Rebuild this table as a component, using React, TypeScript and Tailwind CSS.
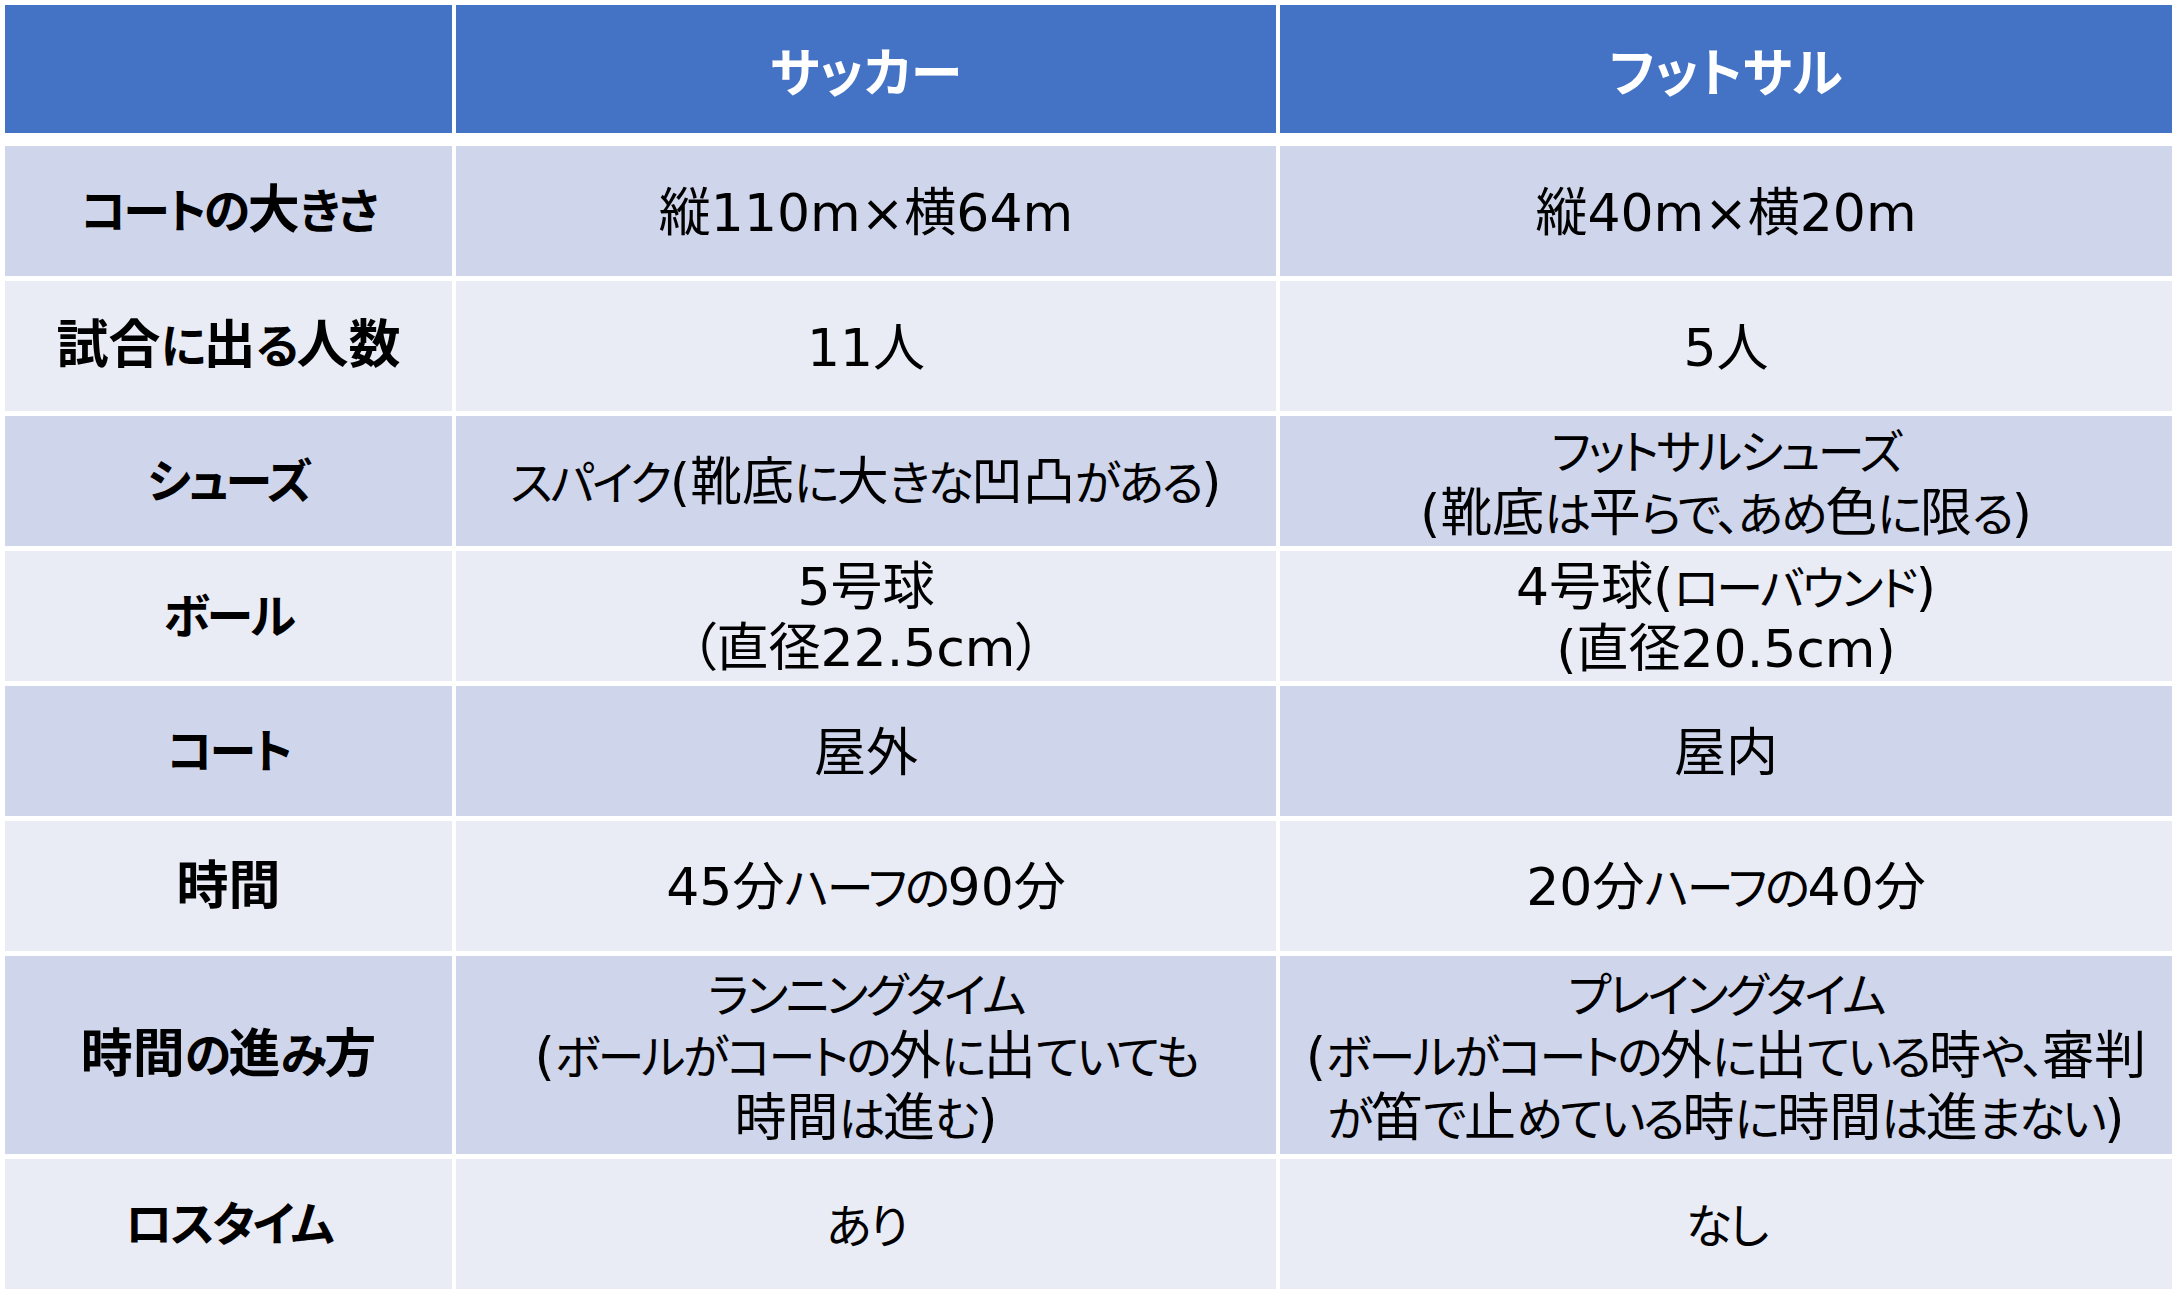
import React from 'react';

type Row = {
  label: string;
  soccer: string[];
  futsal: string[];
  tall?: boolean;
};

const ROWS: Row[] = [
  { label: 'コートの大きさ', soccer: ['縦110m×横64m'], futsal: ['縦40m×横20m'] },
  { label: '試合に出る人数', soccer: ['11人'], futsal: ['5人'] },
  {
    label: 'シューズ',
    soccer: ['スパイク(靴底に大きな凹凸がある)'],
    futsal: ['フットサルシューズ', '(靴底は平らで、あめ色に限る)'],
  },
  {
    label: 'ボール',
    soccer: ['5号球', '（直径22.5cm）'],
    futsal: ['4号球(ローバウンド)', '(直径20.5cm)'],
  },
  { label: 'コート', soccer: ['屋外'], futsal: ['屋内'] },
  { label: '時間', soccer: ['45分ハーフの90分'], futsal: ['20分ハーフの40分'] },
  {
    label: '時間の進み方',
    soccer: ['ランニングタイム', '(ボールがコートの外に出ていても', '時間は進む)'],
    futsal: [
      'プレイングタイム',
      '(ボールがコートの外に出ている時や、審判',
      'が笛で止めている時に時間は進まない)',
    ],
    tall: true,
  },
  { label: 'ロスタイム', soccer: ['あり'], futsal: ['なし'] },
];

// kana in the slide font are narrower than kanji, so set them a bit smaller and tighter
const KANA = /([\u3040-\u30ff\u3001\u3002]+)/;

function Line({ text, condense }: { text: string; condense: boolean }) {
  if (!condense) return <span>{text}</span>;
  return (
    <span>
      {text.split(KANA).map((part, i) =>
        KANA.test(part) ? (
          <span key={i} className="text-[47px] tracking-[-2.5px]">
            {part}
          </span>
        ) : (
          <React.Fragment key={i}>{part}</React.Fragment>
        )
      )}
    </span>
  );
}

function Cell({
  lines,
  bold,
  condense = true,
  className,
}: {
  lines: string[];
  bold?: boolean;
  condense?: boolean;
  className: string;
}) {
  return (
    <div
      className={
        'flex flex-col items-center justify-center overflow-visible text-center leading-[61px] whitespace-nowrap ' +
        (bold ? 'font-bold ' : '') +
        className
      }
    >
      {lines.map((l, i) => (
        <Line key={i} text={l} condense={condense} />
      ))}
    </div>
  );
}

export default function App(): React.ReactElement {
  return (
    <div className="min-h-screen bg-white pt-[5px] pl-[5px] font-['DejaVu_Sans','Noto_Sans_CJK_JP',sans-serif] text-[52px] text-black [font-feature-settings:'palt']">
      <div className="grid w-[2167px] grid-cols-[447px_820px_892px] gap-x-[4px] gap-y-[5px]">
        {/* Header */}
        <div className="h-[128px] bg-[#4472c4]" />
        <Cell
          lines={['サッカー']}
          bold
          condense={false}
          className="h-[128px] bg-[#4472c4] pt-[10px] text-white"
        />
        <Cell
          lines={['フットサル']}
          bold
          condense={false}
          className="h-[128px] bg-[#4472c4] pt-[10px] text-white"
        />
        <div className="col-span-3 h-[3px]" />

        {ROWS.map((row, i) => {
          const bg = i % 2 === 0 ? 'bg-[#cfd5ea]' : 'bg-[#e9ebf5]';
          const h = row.tall ? 'h-[198px]' : 'h-[130px]';
          return (
            <React.Fragment key={row.label}>
              <Cell lines={[row.label]} bold className={`${h} ${bg}`} />
              <Cell lines={row.soccer} className={`${h} ${bg} pt-[4px]`} />
              <Cell lines={row.futsal} className={`${h} ${bg} pt-[4px]`} />
            </React.Fragment>
          );
        })}
      </div>
    </div>
  );
}
